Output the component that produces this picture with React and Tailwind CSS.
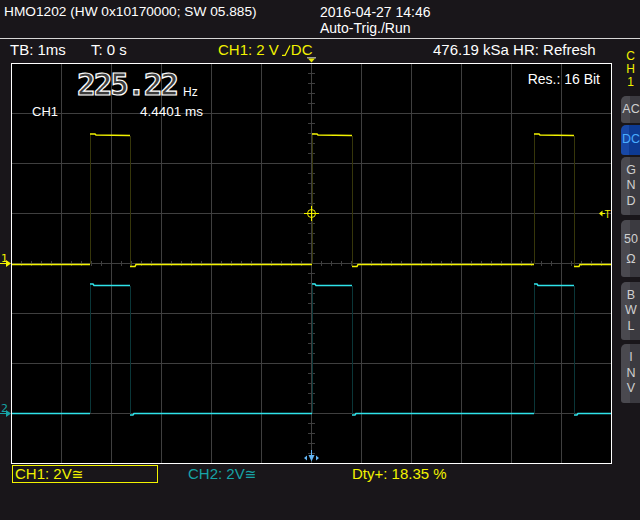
import React from "react";

// graticule geometry (page coordinates, frame is x 11..611, y 63..463)
const GRID_X = [61, 111, 161, 211, 261, 311, 361, 411, 461, 511, 561];
const GRID_Y = [113, 163, 213, 263, 313, 363, 413];
const PULSES = [90, 312, 534];

const YELLOW = "#f2f200";
const CYAN = "#2fe3ea";
const TEAL = "#17a3a6";

function Screen() {
  const ticksH = [];
  for (let x = 21; x < 611; x += 10) ticksH.push(x);
  const ticksV = [];
  for (let y = 73; y < 463; y += 10) ticksV.push(y);

  // traces
  let ch1 = "M12 264.5 H90";
  let ch1Edges = "";
  let ch2 = "M12 413.5 H90";
  let ch2Edges = "";
  PULSES.forEach((x0, i) => {
    const next = i < PULSES.length - 1 ? PULSES[i + 1] : 611;
    ch1 += ` M${x0} 134 H${x0 + 5} L${x0 + 6} 135 L${x0 + 40} 135.5`;
    ch1 += ` M${x0 + 40} 266.5 H${x0 + 45} L${x0 + 46} 264.5 H${next}`;
    ch1Edges += ` M${x0 + 0.5} 134 V264 M${x0 + 40.5} 136 V266`;
    ch2 += ` M${x0} 284 H${x0 + 3} L${x0 + 4} 285.5 H${x0 + 40}`;
    ch2 += ` M${x0 + 40} 415 H${x0 + 43} L${x0 + 44} 413.5 H${next}`;
    ch2Edges += ` M${x0 + 0.5} 285 V413 M${x0 + 40.5} 286 V414`;
  });

  return (
    <svg className="absolute inset-0" width="599" height="399" viewBox="12 64 599 399">
      {/* grid */}
      {GRID_X.map((x) => (
        <line key={"gx" + x} x1={x + 0.5} y1="64" x2={x + 0.5} y2="463" stroke="#3f3f3f" />
      ))}
      {GRID_Y.map((y) => (
        <line key={"gy" + y} x1="12" y1={y + 0.5} x2="611" y2={y + 0.5} stroke="#3f3f3f" />
      ))}
      {ticksH.map((x) => (
        <line key={"th" + x} x1={x + 0.5} y1="261" x2={x + 0.5} y2="266" stroke="#3f3f3f" />
      ))}
      {ticksV.map((y) => (
        <line key={"tv" + y} x1="308" y1={y + 0.5} x2="315" y2={y + 0.5} stroke="#3f3f3f" />
      ))}

      {/* traces */}
      <path d={ch1Edges} stroke="#36360a" strokeWidth="1" fill="none" />
      <path d={ch2Edges} stroke="#0a3638" strokeWidth="1" fill="none" />
      <path d={ch2} stroke={CYAN} strokeWidth="1.5" fill="none" />
      <path d={ch1} stroke={YELLOW} strokeWidth="1.5" fill="none" />

      {/* trigger crosshair */}
      <circle cx="311.5" cy="213.5" r="4" stroke={YELLOW} strokeWidth="1" fill="none" />
      <path d="M304 213.5 H319 M311.5 206 V221" stroke={YELLOW} strokeWidth="1" />

      {/* trigger level marker */}
      <path d="M599 213.5 L602.5 210.5 V216.5 Z" fill={YELLOW} />
      <path d="M601 213.5 H605" stroke={YELLOW} />
      <text x="604.5" y="217.5" fontSize="10" fill={YELLOW} fontFamily="Liberation Sans, sans-serif">T</text>

      {/* time reference marker */}
      <path d="M311.5 450 V456" stroke="#63b4f2" />
      <path d="M308.5 455 H314.5 L311.5 461.5 Z" fill="#63b4f2" />
      <path d="M304 458 L307 455.5 V460.5 Z M319 458 L316 455.5 V460.5 Z" fill="#63b4f2" />
    </svg>
  );
}

function Gutter() {
  return (
    <div className="relative w-[11px] h-[401px]">
      <svg className="absolute left-0 top-0" width="11" height="401" viewBox="0 63 11 401">
        <text x="1" y="261.5" fontSize="11" fill={YELLOW} fontFamily="DejaVu Sans, sans-serif">1</text>
        <path d="M0 263.5 H7" stroke={YELLOW} />
        <path d="M6 260 L11 263.5 L6 267 Z" fill={YELLOW} />
        <text x="1" y="411.5" fontSize="11" fill={TEAL} fontFamily="DejaVu Sans, sans-serif">2</text>
        <path d="M0 413.5 H7" stroke={TEAL} />
        <path d="M6 410 L11 413.5 L6 417 Z" fill={TEAL} />
      </svg>
    </div>
  );
}

function SideButton({ active, lines, lead = "leading-[15.5px]", h }) {
  const bg = active
    ? "bg-[linear-gradient(to_right,#1848a6_0,#1848a6_8px,#0d3a92_8px)] text-[#49acff]"
    : "bg-[linear-gradient(to_right,#4a494f_0,#4a494f_9px,#3b3a40_9px)] text-[#cfcfcf]";
  return (
    <div className={`${bg} ${h} w-[24px] rounded-tl-[5px] rounded-bl-[3px] flex items-center`}>
      <div className={`w-[20px] text-center text-[12.5px] ${lead}`}>
        {lines.map((l) => (
          <div key={l}>{l}</div>
        ))}
      </div>
    </div>
  );
}

export default function App() {
  return (
    <div className="w-[640px] h-[520px] overflow-hidden bg-[#19161a] text-white font-['Liberation_Sans',Arial,sans-serif]">
      {/* header */}
      <div className="h-[38px] flex text-[14px] leading-[16px] pt-[4px]">
        <div className="w-[320px] pl-[4px] text-[13.7px]">HMO1202 (HW 0x10170000; SW 05.885)</div>
        <div>
          <div>2016-04-27 14:46</div>
          <div>Auto-Trig./Run</div>
        </div>
      </div>
      <div className="h-px bg-[#d6d6d6]" />

      <div className="flex">
        {/* main column */}
        <div className="w-[612px]">
          <div className="relative h-[24px] flex pl-[10px] text-[15px] leading-[22px]">
            <span className="w-[81px]">TB: 1ms</span>
            <span className="w-[127px]">T: 0 s</span>
            <span className="w-[215px] text-[#f2f200] flex items-start">
              CH1: 2 V
              <svg className="ml-[3px] mt-[6px]" width="9" height="11" viewBox="0 0 9 11">
                <path d="M0 10.5 H3 L8 0.5" stroke="#f2f200" strokeWidth="1.3" fill="none" />
              </svg>
              DC
            </span>
            <span>476.19 kSa HR: Refresh</span>
            <svg className="absolute left-[307px] top-[18px]" width="10" height="6" viewBox="0 0 10 6">
              <rect x="0" y="0" width="9" height="1.5" fill="#9a9a9a" />
              <path d="M1 1.5 H8 L4.5 5.5 Z" fill="#e6e600" />
            </svg>
          </div>

          <div className="flex">
            <Gutter />
            <div className="relative w-[601px] h-[401px] border border-white bg-black">
              <Screen />
              <div className="absolute left-[65px] top-[5px] font-['DejaVu_Sans_Mono',monospace] font-bold text-[31px] leading-none tracking-[-2px] text-[#3c3c3c] [-webkit-text-stroke:1.2px_#ffffff]">
                225.22
              </div>
              <div className="absolute left-[171px] top-[22px] text-[12px] leading-none">Hz</div>
              <div className="absolute left-[20px] top-[41px] text-[13px] leading-none">CH1</div>
              <div className="absolute left-[128px] top-[41px] text-[13.5px] leading-none">4.4401 ms</div>
              <div className="absolute right-[11px] top-[8px] text-[14px] leading-none">Res.: 16 Bit</div>
            </div>
          </div>

          {/* bottom status row */}
          <div className="flex mt-[1px] text-[15px] leading-[16px]">
            <div className="ml-[12px] w-[146px] h-[18px] border border-[#f2f200] text-[#f2f200] pl-[2px]">
              CH1: 2V<span className="font-['DejaVu_Sans',sans-serif] text-[14px]">≅</span>
            </div>
            <div className="ml-[29px] w-[164px] h-[18px] border border-transparent text-[#17a3a6]">
              CH2: 2V<span className="font-['DejaVu_Sans',sans-serif] text-[14px]">≅</span>
            </div>
            <div className="h-[18px] border border-transparent text-[#f2f200]">Dty+: 18.35 %</div>
          </div>
        </div>

        {/* side panel */}
        <div className="w-[28px] pl-[9px] flex flex-col">
          <div className="mt-[11px] w-[19px] text-center text-[12px] leading-[13px] text-[#f2f200]">
            <div>C</div>
            <div>H</div>
            <div>1</div>
          </div>
          <div className="mt-[7px]">
            <SideButton lines={["AC"]} h="h-[27px]" />
          </div>
          <div className="mt-[2px]">
            <SideButton active lines={["DC"]} h="h-[30px]" />
          </div>
          <div className="mt-[2px]">
            <SideButton lines={["G", "N", "D"]} h="h-[58px]" />
          </div>
          <div className="mt-[5px]">
            <SideButton lines={["50", "Ω"]} lead="leading-[20px]" h="h-[57px]" />
          </div>
          <div className="mt-[5px]">
            <SideButton lines={["B", "W", "L"]} h="h-[58px]" />
          </div>
          <div className="mt-[4px]">
            <SideButton lines={["I", "N", "V"]} h="h-[59px]" />
          </div>
        </div>
      </div>
    </div>
  );
}
